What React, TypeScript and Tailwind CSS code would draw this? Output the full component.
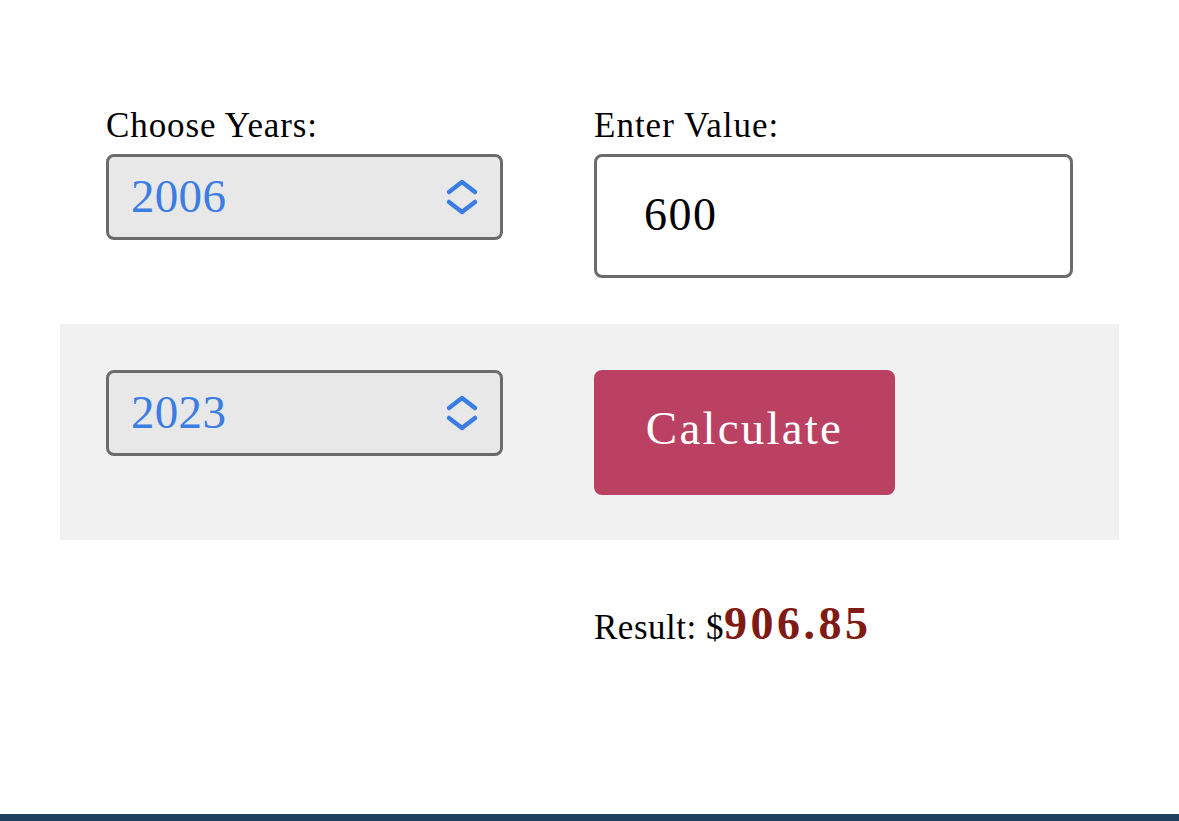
import React, { useState } from 'react'

const serif = "font-['Liberation_Serif',serif]"

const years = Array.from({ length: 2024 - 1913 }, (_, i) => String(1913 + i))

function UpDown() {
  return (
    <svg width="34" height="36" viewBox="0 0 34 36" fill="none" stroke="#3b7de2" strokeWidth="4.5" strokeLinecap="round" strokeLinejoin="round">
      <path d="M4 13 L17 3 L30 13" />
      <path d="M4 23 L17 33 L30 23" />
    </svg>
  )
}

function YearSelect({ value, onChange }: { value: string; onChange: (v: string) => void }) {
  return (
    <div className="relative w-[397px] h-[86px]">
      <select
        value={value}
        onChange={(e) => onChange(e.target.value)}
        className={`${serif} appearance-none w-full h-full bg-[#e8e8e8] border-[3px] border-[#6b6b6b] rounded-[8px] pl-[22px] pb-[2px] text-[47px] text-[#3b7de2] tracking-[0.3px] outline-none`}
      >
        {years.map((y) => (
          <option key={y} value={y}>{y}</option>
        ))}
      </select>
      <div className="absolute right-[24px] top-[25px] pointer-events-none">
        <UpDown />
      </div>
    </div>
  )
}

export default function App() {
  const [from, setFrom] = useState('2006')
  const [to, setTo] = useState('2023')
  const [amount, setAmount] = useState('600')

  return (
    <div className={`${serif} h-[821px] flex flex-col bg-white text-black`}>
      <main className="flex-1 px-[60px] pt-[104px]">
        {/* first row */}
        <div className="flex px-[46px]">
          <div className="w-[488px] flex flex-col">
            <label className="text-[35px] leading-[44px] tracking-[0.9px] mb-[6px]">Choose Years:</label>
            <YearSelect value={from} onChange={setFrom} />
          </div>
          <div className="flex-1 flex flex-col">
            <label className="text-[35px] leading-[44px] tracking-[1px] mb-[6px]">Enter Value:</label>
            <input
              value={amount}
              onChange={(e) => setAmount(e.target.value)}
              className={`${serif} w-[479px] h-[124px] border-[3px] border-[#6b6b6b] rounded-[8px] bg-white pl-[47px] pb-[4px] text-[46px] tracking-[1.5px] text-black outline-none`}
            />
          </div>
        </div>

        {/* second row */}
        <div className="mt-[46px] bg-[#f1f1f1] flex px-[46px] pt-[46px] pb-[45px]">
          <div className="w-[488px]">
            <YearSelect value={to} onChange={setTo} />
          </div>
          <div className="flex-1">
            <button className="w-[301px] h-[125px] bg-[#bb4163] rounded-[8px] text-white text-[47px] tracking-[2.2px] pb-[8px]">
              Calculate
            </button>
          </div>
        </div>

        {/* result */}
        <div className="flex px-[46px] mt-[54px]">
          <div className="w-[488px]" />
          <p className="text-[35px] tracking-[0.5px] leading-[60px]">
            Result: $<span className="font-bold text-[46px] tracking-[3.5px] text-[#7f1a14]">906.85</span>
          </p>
        </div>
      </main>
      <footer className="h-[7px] bg-[#1f4160]" />
    </div>
  )
}
